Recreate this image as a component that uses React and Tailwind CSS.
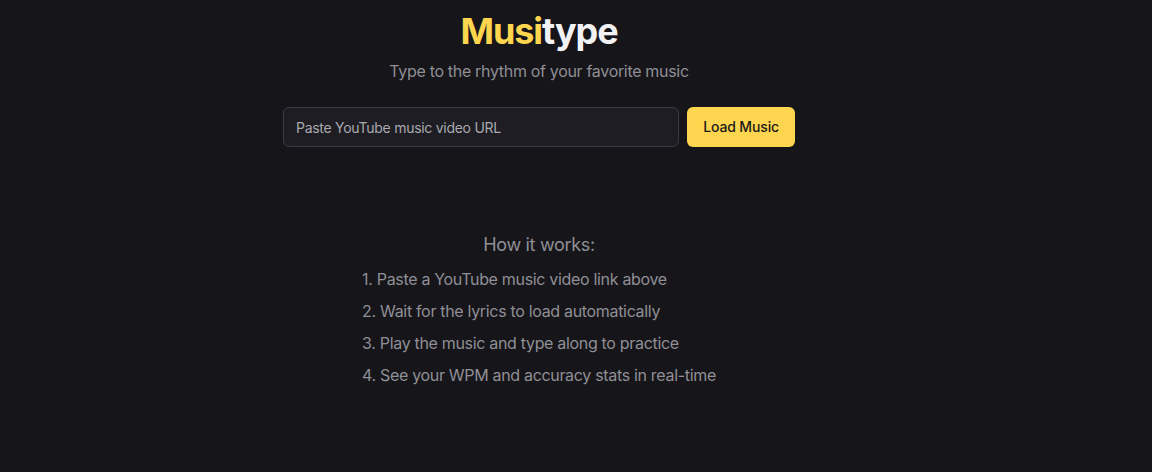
export default function App() {
  const steps = [
    'Paste a YouTube music video link above',
    'Wait for the lyrics to load automatically',
    'Play the music and type along to practice',
    'See your WPM and accuracy stats in real-time',
  ];

  return (
    <div
      className="min-h-screen bg-[#16151a] text-white"
      style={{ fontFamily: 'Inter, "Noto Sans", sans-serif' }}
    >
      <div className="w-[1078px] flex flex-col items-center pt-[11px]">
        {/* Header */}
        <h1 className="text-4xl font-bold leading-10 tracking-[-0.03em]">
          <span className="text-[#fdd54e]">Musi</span>
          <span className="text-[#f2f2f4]">type</span>
        </h1>
        <p className="mt-2 text-base leading-6 tracking-[-0.02em] text-[#8f8f95]">
          Type to the rhythm of your favorite music
        </p>

        {/* URL form */}
        <form className="mt-6 flex gap-2 w-[512px]" onSubmit={(e) => e.preventDefault()}>
          <input
            type="text"
            placeholder="Paste YouTube music video URL"
            className="flex-1 h-10 rounded-md border border-[#3a3a41] bg-[#1e1d23] px-3 text-sm tracking-[-0.02em] text-white placeholder:text-[#a9a9ae] outline-none"
          />
          <button
            type="submit"
            className="h-10 rounded-md bg-[#fdd54e] px-4 text-sm font-medium tracking-[-0.01em] text-[#1a1a1a]"
          >
            Load Music
          </button>
        </form>

        {/* How it works */}
        <div className="mt-[84px] flex flex-col items-center tracking-[-0.02em] text-[#8f8f95]">
          <h2 className="text-lg leading-7">How it works:</h2>
          <ol className="mt-2 space-y-2 text-base leading-6">
            {steps.map((s, i) => (
              <li key={i}>
                {i + 1}. {s}
              </li>
            ))}
          </ol>
        </div>
      </div>
    </div>
  );
}
